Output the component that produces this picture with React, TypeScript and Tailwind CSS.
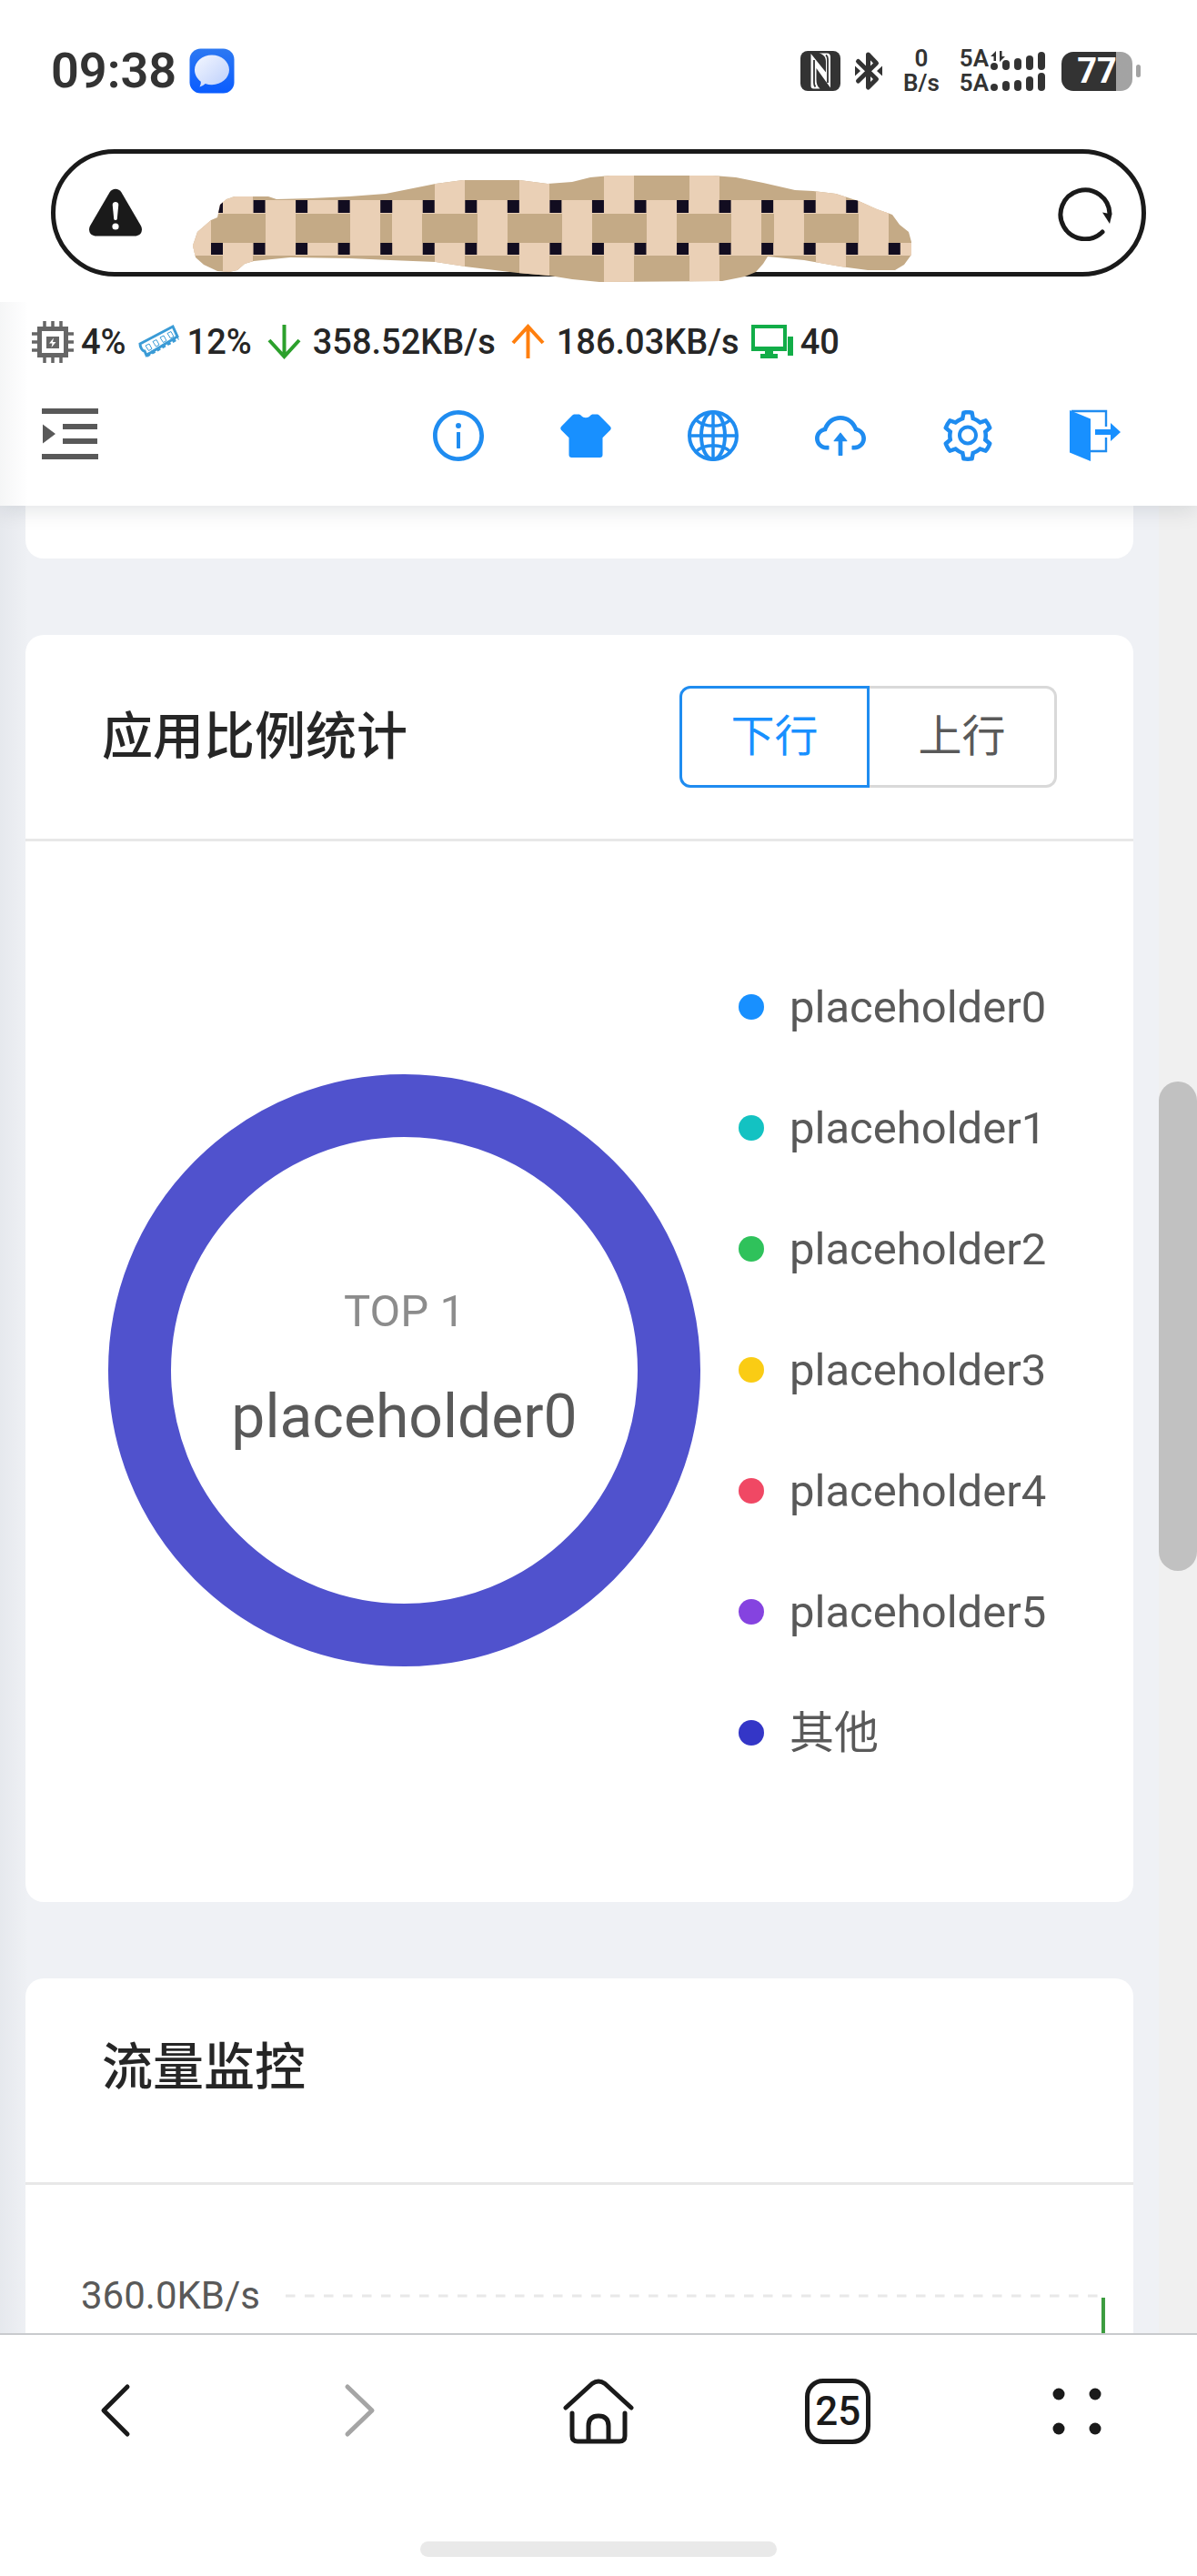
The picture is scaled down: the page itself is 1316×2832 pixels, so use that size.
import React, { useState } from 'react';
import {
  AiOutlineCloudUpload,
  AiOutlineInfoCircle,
  AiOutlineSetting,
} from 'react-icons/ai';
import { clsx } from 'clsx';

const legend = [
  { name: 'placeholder0', color: 'bg-[#1890ff]' },
  { name: 'placeholder1', color: 'bg-[#13c2c2]' },
  { name: 'placeholder2', color: 'bg-[#2fc25b]' },
  { name: 'placeholder3', color: 'bg-[#facc14]' },
  { name: 'placeholder4', color: 'bg-[#f04864]' },
  { name: 'placeholder5', color: 'bg-[#8543e0]' },
  { name: '其他', color: 'bg-[#3436c7]' },
];

const MessageIcon = () => (
  <svg width="50" height="50" viewBox="0 0 50 50">
    <defs>
      <linearGradient id="msg-bg" x1="0" y1="0" x2="0" y2="1">
        <stop offset="0" stopColor="#2c78f2" />
        <stop offset="1" stopColor="#0a5cff" />
      </linearGradient>
      <linearGradient id="msg-bubble" x1="0" y1="0" x2="1" y2="1">
        <stop offset="0" stopColor="#f4f7ff" />
        <stop offset="1" stopColor="#bccffb" />
      </linearGradient>
    </defs>
    <rect x="0.5" y="0.5" width="49" height="49" rx="12" fill="url(#msg-bg)" />
    <path d="M25 7.500c10.500 0 19 7.300 19 16.300s-8.500 16.400-19 16.400c-2.600 0-5-.4-7.300-1.200-1.500 1.600-3.600 2.700-6.200 3.400 1-1.900 1.400-3.600 1.300-5.700C8.600 33.700 6 29 6 23.800 6 14.800 14.500 7.500 25 7.500z" fill="url(#msg-bubble)" />
  </svg>
);

const NfcIcon = () => (
  <svg width="46" height="46" viewBox="0 0 46 46">
    <rect x="1" y="1" width="44" height="44" rx="8" fill="#333" />
    <path d="M12.500 4v35.500c0 2 1 3 3 3h7c-3-2.500-4-5.500-4-10V20L34 41.500V8c0-3-1-4.500-4-4.500h-8.500c5 1.500 7.500 4 7.500 9v12L12.500 4z" fill="#fff" />
    <path d="M16 11v25c0 2 .5 3.500 1.500 4.500M31 36V10c0-2-.6-3.500-2-4.500" stroke="#333" strokeWidth="1.800" fill="none" />
  </svg>
);

const BluetoothIcon = () => (
  <svg width="32" height="46" viewBox="0 0 32 46">
    <path d="M4.500 12.500L24.500 32 15.500 41V5l9 9.500L4.500 34" fill="none" stroke="#333" strokeWidth="5" strokeLinejoin="round" strokeLinecap="round" />
    <path d="M1 17.500l6 5.500-6 5.500zM31 17.500L25 23l6 5.500z" fill="#333" />
  </svg>
);

const SignalIcon = () => (
  <svg width="66" height="46" viewBox="0 0 66 46" fill="#333">
    <path d="M2 7L8 1v11H5.500V7zM18 7l-6 6V1h2.500v6z" />
    <rect x="2" y="14" width="8" height="8" rx="4" />
    <rect x="15" y="11" width="8" height="11" rx="4" />
    <rect x="28" y="9" width="8" height="13" rx="4" />
    <rect x="41" y="6" width="8" height="16" rx="4" />
    <rect x="54" y="2" width="8" height="20" rx="4" />
    <rect x="2" y="37" width="8" height="8" rx="4" />
    <rect x="15" y="34" width="8" height="11" rx="4" />
    <rect x="28" y="33" width="8" height="12" rx="4" />
    <rect x="41" y="29" width="8" height="16" rx="4" />
    <rect x="54" y="25" width="8" height="20" rx="4" />
  </svg>
);

const WarningIcon = () => (
  <svg width="60" height="54" viewBox="0 0 60 54">
    <path d="M23.500 4.500c3-5 10-5 13 0l21 36c3.500 6 .5 12-6.500 12H9c-7 0-10-6-6.500-12z" fill="#1a1a1a" />
    <path d="M26.700 18c0-4 6.600-4 6.600 0l-1.500 15.500c-.4 2-3.200 2-3.600 0z" fill="#fff" />
    <circle cx="30" cy="42" r="3.600" fill="#fff" />
  </svg>
);

const ReloadIcon = () => (
  <svg width="62" height="62" viewBox="0 0 62 62" fill="none">
    <path d="M49 52A27 27 0 1 1 57 32" stroke="#1a1a1a" strokeWidth="5" strokeLinecap="round" />
    <path d="M49 30.500l10.500 2L57 43z" fill="#1a1a1a" />
  </svg>
);

// woven pattern brushed over the page address
const tallStripes = [81, 174, 220, 314, 407, 500, 593, 640, 733];
const capStripes = [34, 267, 360, 453, 547, 686];
const knots = Array.from({ length: 17 }, (_, i) => 21 + i * 46.55);

const AddressMask = () => (
  <svg width="794" height="120" viewBox="0 0 794 120" aria-hidden="true">
    <clipPath id="brush">
      <path d="M1 78 6 63 21 50 28 47 31 33 38 27 47 24 84 24 93 27 131 26 173 24 213 21 253 13 268 10 298 6 360 6 391 10 418 8 438 3 460 1 573 1 598 3 628 9 663 17 683 18 708 21 733 29 753 38 770 44 778 55 788 63 791 74 791 88 783 99 773 105 743 105 713 101 673 94 633 90 628 98 620 107 608 112 583 117 448 118 418 115 393 111 358 108 333 105 300 101 268 96 218 94 173 92 108 91 68 95 58 98 50 105 41 107 28 106 13 99 4 91z" />
    </clipPath>
    <g clipPath="url(#brush)">
      <rect width="794" height="120" fill="#c4aa86" />
      <rect y="28" width="794" height="15" fill="#ead0b6" />
      <rect y="75" width="794" height="14" fill="#ead0b6" />
      <rect y="43" width="21" height="46" fill="#ead0b6" />
      {tallStripes.map((x) => (
        <rect key={x} x={x} y="28" width="33" height="61" fill="#ead0b6" />
      ))}
      {capStripes.map((x) => (
        <g key={x} fill="#ead0b6">
          <rect x={x} width="33" height="43" />
          <rect x={x} y="75" width="33" height="45" />
        </g>
      ))}
      {knots.map((x) => (
        <g key={x} fill="#120d20">
          <rect x={x} y="28" width="13" height="14" />
          <rect x={x} y="75" width="13" height="13" />
        </g>
      ))}
    </g>
  </svg>
);

const CpuIcon = () => (
  <svg width="46" height="46" viewBox="0 0 46 46" fill="none" stroke="#666">
    <rect x="8.500" y="8.500" width="29" height="29" strokeWidth="5" />
    <path d="M14 0v7M23 0v7M32 0v7M14 39v7M23 39v7M32 39v7M0 14h7M0 23h7M0 32h7M39 14h7M39 23h7M39 32h7" strokeWidth="3.500" />
    <rect x="16" y="17" width="14" height="13" fill="#666" stroke="none" />
    <path d="M24 18.500l-5 6h3.500l-1 4.500 5-6H23z" fill="#fff" stroke="none" />
  </svg>
);

const MemoryIcon = () => (
  <svg width="46" height="46" viewBox="0 0 46 46" fill="none" stroke="#3a9bd6">
    <path d="M2 25L38 6l5 11L9 37.500l-2-4.500c-3 0-5-5-5-8z" strokeWidth="3" />
    <path d="M9 38L44 18.500" strokeWidth="4" strokeDasharray="4 2.500" />
    <path d="M8 27l4-2 3 5.500-3.500 2zM16 22.500l4-2 3 5.500-3.500 2zM24 18l4-2 3 5.500-3.500 2zM32 13.500l4-2 3 5.500-3.500 2z" strokeWidth="1" />
  </svg>
);

const DownIcon = () => (
  <svg width="46" height="46" viewBox="0 0 46 46" fill="none" stroke="#2ca02c" strokeWidth="4">
    <path d="M22.500 4v34M6 21l16.500 18L39 21" />
  </svg>
);

const UpIcon = () => (
  <svg width="46" height="46" viewBox="0 0 46 46" fill="none" stroke="#ff7f0e" strokeWidth="4">
    <path d="M22.500 41V7M6 24L22.500 6 39 24" />
  </svg>
);

const MonitorIcon = () => (
  <svg width="46" height="46" viewBox="0 0 46 46" fill="#12ad48">
    <path d="M0 4h39v29H24v3h5v5H10v-5h5v-3H0zM4 8v20h31V8z" fillRule="evenodd" />
    <rect x="40" y="17" width="6" height="21" />
  </svg>
);

const MenuIcon = () => (
  <svg width="64" height="62" viewBox="0 0 64 62" fill="#595959">
    <path d="M1 1h62v6H1zM24 18h38v6H24zM24 34h38v6H24zM1 51h62v6H1zM2 18.500l14 10.500L2 39.500z" />
  </svg>
);

const ShirtIcon = () => (
  <svg width="64" height="64" viewBox="0 0 64 64" fill="#1890ff">
    <path d="M20 8.500h4c1.500 0 2 .5 3 1.500 3 3 7 3 10 0 1-1 1.500-1.500 3-1.500h4c1.500 0 2.500.5 3.500 1.700L59 22c1 1.200 1 2.500 0 3.700l-8.500 8.500V53c0 2-1 3-3 3h-31c-2 0-3-1-3-3V34.200L5 25.700c-1-1.200-1-2.500 0-3.700l11.500-11.800C17.500 9 18.500 8.500 20 8.500z" />
  </svg>
);

const GlobeIcon = () => (
  <svg width="64" height="64" viewBox="0 0 64 64" fill="none" stroke="#1f8cf0" strokeWidth="4">
    <circle cx="32" cy="32" r="26" />
    <ellipse cx="32" cy="32" rx="13" ry="26" />
    <path d="M32 5v54M5 32h54M13 14.500c10 9 28 9 38 0M13 49.500c10-9 28-9 38 0" strokeWidth="3.500" />
  </svg>
);

const LogoutIcon = () => (
  <svg width="64" height="64" viewBox="0 0 64 64">
    <path d="M6 5h38v17M44 34v15H27" fill="none" stroke="#1f8cf0" strokeWidth="2.400" />
    <path d="M4 4l23 9.500V60L4 50.500zM32 25h17v-7l11 10-11 10v-7H32z" fill="#1890ff" />
  </svg>
);

const HomeIcon = () => (
  <svg width="78" height="74" viewBox="0 0 78 74" fill="none" stroke="#1a1a1a" strokeWidth="5" strokeLinecap="round" strokeLinejoin="round">
    <path d="M3 33L32 6.500q7-5 14 0L75 33" />
    <path d="M10 39v25q0 6 6 6h46q6 0 6-6V39" />
    <path d="M28 69V53q0-11 11-11t11 11v16" />
  </svg>
);

const stats = [
  { icon: <CpuIcon />, value: '4%' },
  { icon: <MemoryIcon />, value: '12%' },
  { icon: <DownIcon />, value: '358.52KB/s' },
  { icon: <UpIcon />, value: '186.03KB/s' },
  { icon: <MonitorIcon />, value: '40' },
];

const tools = [
  { label: '关于', icon: <AiOutlineInfoCircle className="w-16 h-16" /> },
  { label: '主题', icon: <ShirtIcon /> },
  { label: '语言', icon: <GlobeIcon /> },
  { label: '升级', icon: <AiOutlineCloudUpload className="w-16 h-16" /> },
  { label: '设置', icon: <AiOutlineSetting className="w-16 h-16" /> },
  { label: '退出', icon: <LogoutIcon /> },
];

const StatusBar = () => (
  <div className="h-[156px] pl-14 pr-[62px] flex items-center justify-between text-[#333]">
    <div className="flex items-center gap-[14px]">
      <span className="text-[54px] leading-none font-semibold">09:38</span>
      <MessageIcon />
    </div>
    <div className="flex items-center">
      <NfcIcon />
      <div className="ml-[14px]">
        <BluetoothIcon />
      </div>
      <div className="ml-[22px] text-[26px] leading-[27px] font-semibold text-center">
        <div>0</div>
        <div>B/s</div>
      </div>
      <div className="ml-[22px] text-[26px] leading-[27px] font-semibold">
        <div>5A</div>
        <div>5A</div>
      </div>
      <SignalIcon />
      <div className="ml-[14px] w-[78px] h-[43px] rounded-[13px] overflow-hidden bg-linear-to-r from-[#333] from-77% to-[#a3a3a3] to-77% flex items-center justify-center text-white text-[38px] leading-none font-bold">
        77
      </div>
      <div className="ml-1 w-[5px] h-[14px] rounded-sm bg-[#a3a3a3]" />
    </div>
  </div>
);

const AddressBar = () => (
  <div className="relative mx-14 mt-2 mb-7 h-[140px] rounded-full border-5 border-[#1a1a1a] pl-9 pr-[30px] flex items-center justify-between">
    <WarningIcon />
    <div className="absolute left-[150px] top-[23px]">
      <AddressMask />
    </div>
    <button type="button" aria-label="刷新">
      <ReloadIcon />
    </button>
  </div>
);

const PageHeader = () => (
  <header className="relative z-10 shadow-[0_4px_24px_rgba(0,21,41,0.12)] bg-white">
    <div className="h-[88px] pl-[35px] flex items-center gap-[13px]">
      {stats.map((s) => (
        <div key={s.value} className="flex items-center gap-2">
          {s.icon}
          <span className="text-[38px] leading-none font-medium text-[#262626]">{s.value}</span>
        </div>
      ))}
    </div>
    <div className="h-[136px] pb-[18px] pl-[45px] pr-20 flex items-center justify-between">
      <button type="button" aria-label="菜单">
        <MenuIcon />
      </button>
      <nav className="flex gap-[76px] text-[#1f8cf0]">
        {tools.map((t) => (
          <button key={t.label} type="button" aria-label={t.label}>
            {t.icon}
          </button>
        ))}
      </nav>
    </div>
  </header>
);

const AppRatioCard = () => {
  const [direction, setDirection] = useState<'down' | 'up'>('down');

  const tabClass = (active: boolean) =>
    clsx(
      'h-28 border-3 text-[48px] leading-none',
      active ? 'border-[#1f8cf0] text-[#1890ff]' : 'border-[#d9d9d9] text-[#595959]'
    );

  return (
    <section className="bg-white rounded-[20px]">
      <div className="h-[227px] px-[84px] border-b-3 border-[#e8e8e8] flex items-center justify-between">
        <h2 className="text-[56px] leading-none font-medium text-[#262626]">应用比例统计</h2>
        <div className="flex">
          <button
            type="button"
            onClick={() => setDirection('down')}
            className={clsx(tabClass(direction === 'down'), 'w-[209px] rounded-l-xl')}
          >
            下行
          </button>
          <button
            type="button"
            onClick={() => setDirection('up')}
            className={clsx(tabClass(direction === 'up'), 'w-[206px] rounded-r-xl border-l-0')}
          >
            上行
          </button>
        </div>
      </div>
      <div className="h-[1166px] pb-1 pl-[91px] flex items-center gap-[42px]">
        <div className="grid place-items-center shrink-0">
          <svg width="651" height="651" viewBox="0 0 651 651" className="col-start-1 row-start-1">
            <circle cx="325.5" cy="325.5" r="291" fill="none" stroke="#5052cd" strokeWidth="69" />
          </svg>
          <div className="col-start-1 row-start-1 pb-3 text-center">
            <p className="text-[49px] leading-[72px] text-[#8c8c8c]">TOP 1</p>
            <p className="mt-11 text-[66px] leading-[72px] text-[#595959]">placeholder0</p>
          </div>
        </div>
        <ul>
          {legend.map((item) => (
            <li key={item.name} className="h-[133px] flex items-center gap-7">
              <span className={clsx('w-7 h-7 rounded-full', item.color)} />
              <span className="text-[49px] leading-none text-[#595959]">{item.name}</span>
            </li>
          ))}
        </ul>
      </div>
    </section>
  );
};

const TrafficCard = () => (
  <section className="bg-white rounded-t-[20px] flex-1 min-h-0 overflow-hidden">
    <div className="h-[227px] px-[84px] pb-7 border-b-3 border-[#e8e8e8] flex items-center">
      <h2 className="text-[56px] leading-none font-medium text-[#262626]">流量监控</h2>
    </div>
    <div className="pt-24 pl-[61px] pr-7 flex">
      <span className="text-[42px] leading-[52px] text-[#595959]">360.0KB/s</span>
      <svg className="ml-7 flex-1 h-[300px]">
        <line x1="0" y1="26" x2="99%" y2="26" stroke="#e8e8e8" strokeWidth="3" strokeDasharray="10.5 10.5" />
        <rect x="100%" y="28" width="4" height="272" fill="#3c9c3f" transform="translate(-7 0)" />
      </svg>
    </div>
  </section>
);

const BottomBar = () => (
  <footer className="h-[267px] border-t-2 border-[#c8cacd] bg-white flex flex-col justify-between items-center pb-[21px]">
    <nav className="w-full h-[168px] grid grid-cols-5 place-items-center">
      <button type="button" aria-label="后退">
        <svg width="44" height="62" viewBox="0 0 44 62" fill="none" stroke="#1a1a1a" strokeWidth="5" strokeLinecap="round" strokeLinejoin="round">
          <path d="M30 4L4 30l26 26" />
        </svg>
      </button>
      <button type="button" aria-label="前进">
        <svg width="36" height="62" viewBox="0 0 36 62" fill="none" stroke="#a5a5a5" strokeWidth="5" strokeLinecap="round" strokeLinejoin="round">
          <path d="M5 4l27 26L5 56" />
        </svg>
      </button>
      <button type="button" aria-label="主页">
        <HomeIcon />
      </button>
      <button
        type="button"
        className="w-[72px] h-[72px] border-5 border-[#1a1a1a] rounded-[20px] text-[44px] leading-none font-medium text-[#1a1a1a]"
      >
        25
      </button>
      <button type="button" aria-label="更多">
        <svg width="54" height="52" viewBox="0 0 54 52" fill="#1a1a1a">
          <circle cx="7" cy="7" r="6.500" />
          <circle cx="47" cy="7" r="6.500" />
          <circle cx="7" cy="45" r="6.500" />
          <circle cx="47" cy="45" r="6.500" />
        </svg>
      </button>
    </nav>
    <div className="w-[392px] h-[17px] rounded-full bg-[#e9e9e9]" />
  </footer>
);

export default function App() {
  return (
    <div className="h-screen flex flex-col bg-white font-[Roboto,'Noto_Sans_CJK_SC',sans-serif]">
      <StatusBar />
      <AddressBar />
      <div className="relative flex-1 min-h-0 flex flex-col overflow-hidden bg-[#f0f2f5]">
        <PageHeader />
        <div className="flex-1 min-h-0 flex">
          <main className="flex-1 min-w-0 px-7 flex flex-col gap-[84px] bg-[#eff1f5]">
            <section className="h-[58px] shrink-0 bg-white rounded-b-[20px]" />
            <AppRatioCard />
            <TrafficCard />
          </main>
          <div className="w-[42px] pt-[633px] bg-[#f0f0f0]">
            <div className="h-[538px] rounded-full bg-[#c1c1c1]" />
          </div>
        </div>
        <div className="absolute z-20 left-0 inset-y-0 w-8 bg-linear-to-r from-[rgba(0,21,41,0.04)] to-transparent pointer-events-none" />
      </div>
      <BottomBar />
    </div>
  );
}
